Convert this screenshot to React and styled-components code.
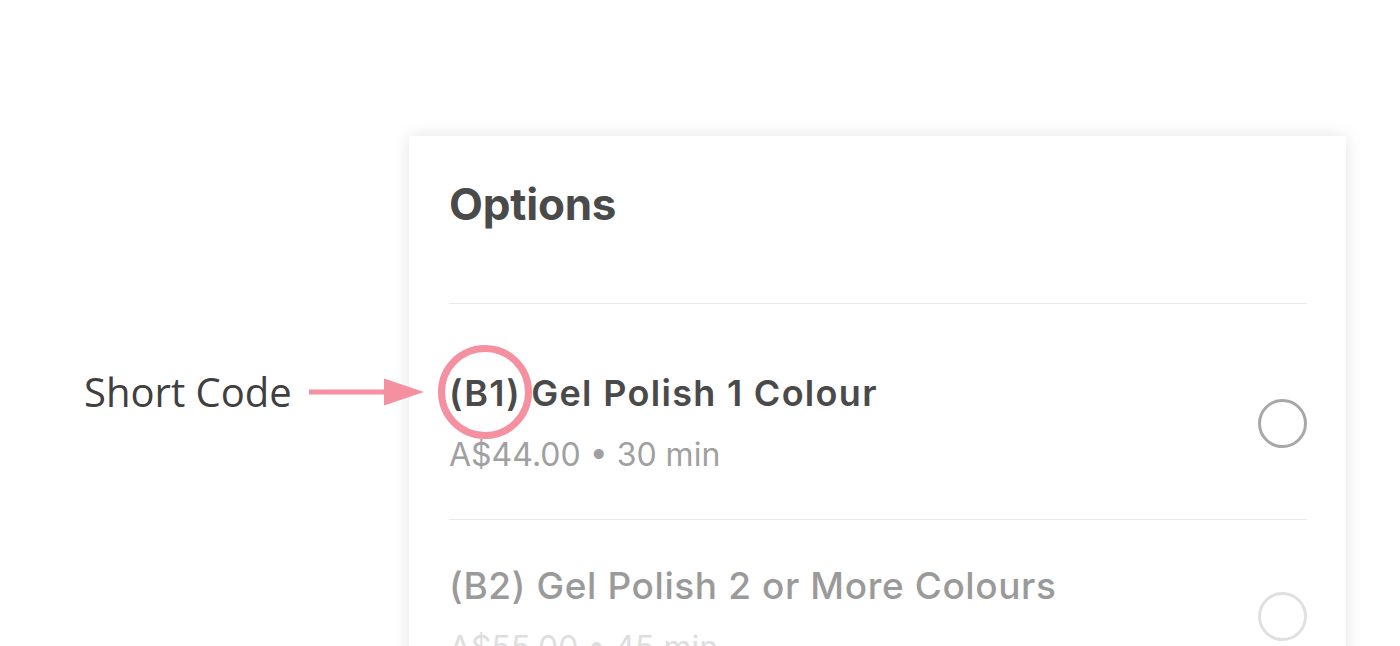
import styled, { createGlobalStyle } from "styled-components"

const GlobalStyle = createGlobalStyle`
  html, body {
    margin: 0;
    padding: 0;
    background: #ffffff;
    overflow: hidden;
  }
  body {
    font-family: Inter, "Noto Sans", sans-serif;
  }
`

const Stage = styled.div`
  position: relative;
  width: 1400px;
  height: 646px;
  padding: 136px 0 0 409px;
  box-sizing: border-box;
  overflow: hidden;
`

const Card = styled.div`
  width: 937px;
  min-height: 700px;
  box-sizing: border-box;
  padding: 42px 39px 0 40px;
  background: #fff;
  box-shadow: 0 0 16px rgba(0, 0, 0, 0.11);
`

const Title = styled.h2`
  margin: 0 0 72px;
  font-size: 44px;
  line-height: 53px;
  font-weight: 700;
  color: #4a4a4a;
  letter-spacing: -0.2px;
`

const Option = styled.div`
  display: grid;
  grid-template-columns: 1fr auto;
  align-items: center;
  border-top: 1px solid #ebebeb;
  padding: ${(p) => (p.$faded ? "44px 0 45px" : "67px 0 44px")};
`

const OptionText = styled.div`
  display: flex;
  flex-direction: column;
  gap: 20px;
`

const OptionName = styled.div`
  font-size: ${(p) => (p.$faded ? "37px" : "36px")};
  line-height: 44px;
  font-weight: ${(p) => (p.$faded ? 500 : 600)};
  letter-spacing: ${(p) => (p.$faded ? "0.6px" : "1.3px")};
  color: ${(p) => (p.$faded ? "#9a9a9a" : "#4a4a4a")};
`

const OptionMeta = styled.div`
  font-size: 32px;
  line-height: 40px;
  font-weight: 400;
  color: ${(p) => (p.$faded ? "#dedede" : "#a0a0a0")};
`

const Radio = styled.span`
  width: 49px;
  height: 49px;
  box-sizing: border-box;
  border-radius: 50%;
  border: 3px solid ${(p) => (p.$faded ? "#e0e0e0" : "#a8a8a8")};
`

const Annotation = styled.div`
  position: absolute;
  left: 84px;
  top: 345px;
  height: 94px;
  display: flex;
  align-items: center;
`

const Label = styled.span`
  font-family: "Open Sans", "Liberation Sans", sans-serif;
  font-size: 40px;
  line-height: 1;
  color: #404040;
  margin-right: 17px;
`

const Arrow = styled.svg`
  width: 115px;
  height: 28px;
  margin-right: 14px;
`

const Ring = styled.svg`
  width: 94px;
  height: 94px;
`

const PINK = "#f4909f"

const options = [
  { name: "(B1) Gel Polish 1 Colour", meta: "A$44.00 • 30 min" },
  { name: "(B2) Gel Polish 2 or More Colours", meta: "A$55.00 • 45 min", faded: true },
]

const App = () => {
  return (
    <>
      <GlobalStyle />
      <Stage>
        <Card>
          <Title>Options</Title>
          {options.map((o) => (
            <Option key={o.name} $faded={o.faded}>
              <OptionText>
                <OptionName $faded={o.faded}>{o.name}</OptionName>
                <OptionMeta $faded={o.faded}>{o.meta}</OptionMeta>
              </OptionText>
              <Radio $faded={o.faded} />
            </Option>
          ))}
        </Card>
        <Annotation>
          <Label>Short Code</Label>
          <Arrow viewBox="0 0 115 28">
            <rect x="0" y="11.5" width="80" height="5" fill={PINK} />
            <polygon points="75,0.5 115,14 75,27.5" fill={PINK} />
          </Arrow>
          <Ring viewBox="0 0 94 94">
            <circle cx="47" cy="47" r="43.5" fill="none" stroke={PINK} strokeWidth="7" />
          </Ring>
        </Annotation>
      </Stage>
    </>
  )
}

export default App
